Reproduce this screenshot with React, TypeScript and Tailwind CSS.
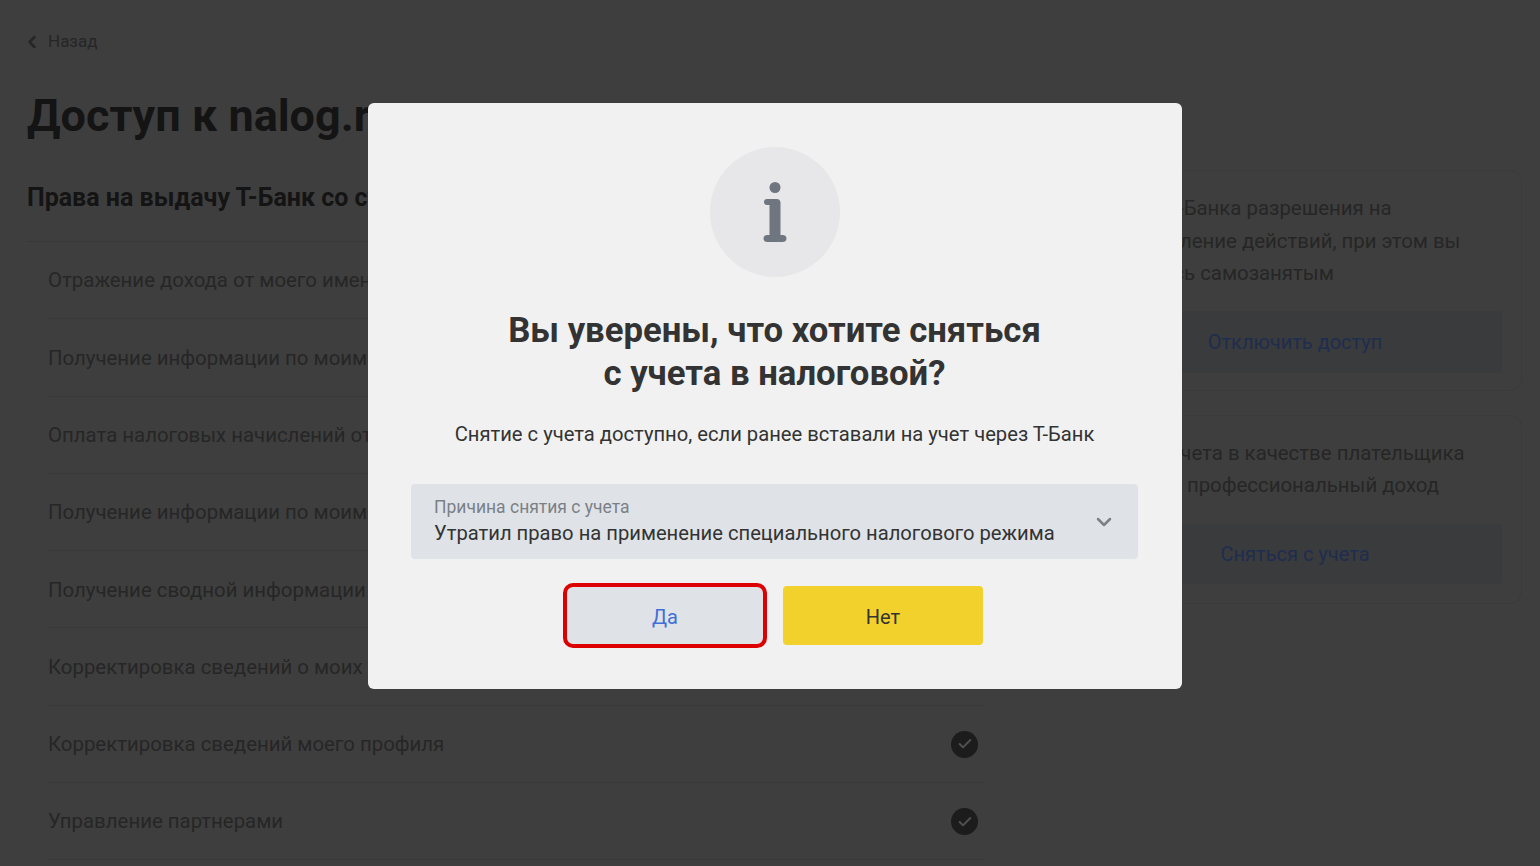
import { Check, ChevronDown, ChevronLeft } from 'lucide-react';

// Rows run on under the modal, so only the part left of it shows
const rights = [
  'Отражение дохода от моего имени',
  'Получение информации по моим доходам',
  'Оплата налоговых начислений от моего',
  'Получение информации по моим',
  'Получение сводной информации',
  'Корректировка сведений о моих доходах',
  'Корректировка сведений моего профиля',
  'Управление партнерами',
];

function InfoIcon() {
  return (
    <svg className="mt-[2px]" width="24" height="62" viewBox="0 0 24 62" fill="#6f7680">
      <circle cx="12" cy="5.5" r="5.5" />
      <path d="M1 20c0-1.700 1.200-3 3-3h10c1.900 0 3.500 1.600 3.500 3.500V53h2c2.200 0 4 1 4 3.500S21.700 60 19.500 60H4.500C2.300 60 .5 59 .5 56.500S2.300 53 4.500 53h2V23H4C2.200 23 1 21.700 1 20z" />
    </svg>
  );
}

export default function App() {
  return (
    <div className="relative h-[866px] w-full overflow-hidden bg-[#3e3e3e] font-['Roboto',sans-serif]">
      <div className="pl-[27px] pr-[18px] pt-[29px]">
        <div className="flex h-[26px] items-center gap-[6px] text-[17px] text-[#262626]">
          <ChevronLeft className="-ml-[5px] h-[20px] w-[20px] text-[#262626]" strokeWidth={3} />
          Назад
        </div>
        <h1 className="mt-[33px] whitespace-nowrap text-[45px] font-bold leading-[56px] text-[#141414]">Доступ к nalog.ru</h1>

        <div className="mt-[38px] flex items-start gap-[84px]">
          <div className="w-[956px] shrink-0">
            <h2 className="mb-[27px] whitespace-nowrap text-[25px] font-bold leading-[32px] text-[#141414]">
              Права на выдачу Т-Банк со статусом самозанятого
            </h2>
            <div className="border-t border-[#383838]">
              {rights.map((text) => (
                <div
                  key={text}
                  className="ml-[21px] flex h-[77.300px] items-center justify-between border-b border-[#383838] pr-[5px] pt-[1px] text-[20.400px] text-[#262626]"
                >
                  {text}
                  <span className="flex h-[27px] w-[27px] items-center justify-center rounded-full bg-[#1c1c1c]">
                    <Check className="h-[16px] w-[16px] text-[#505050]" strokeWidth={3} />
                  </span>
                </div>
              ))}
            </div>
          </div>

          <div className="-mt-[12px] flex flex-1 flex-col gap-[24px]">
            <div className="rounded-[12px] border border-[#3a3a3a] pb-[17px] pl-[20px] pr-[19px] pt-[21px]">
              <p className="whitespace-nowrap text-[20.400px] leading-[32.500px] text-[#262626]">
                Выдали Т-Банка разрешения на
                <br />
                осуществление действий, при этом вы
                <br />
                останетесь самозанятым
              </p>
              <div className="mt-[21px] flex h-[62px] items-center justify-center rounded-[4px] bg-[#3a3b3c] text-[20px] text-[#1f2d4f]">
                Отключить доступ
              </div>
            </div>
            <div className="rounded-[12px] border border-[#3a3a3a] pb-[19px] pl-[20px] pr-[19px] pt-[21px]">
              <p className="whitespace-nowrap text-[20.400px] leading-[32.500px] text-[#262626]">
                Сняты с учета в качестве плательщика
                <br />
                налога на профессиональный доход
              </p>
              <div className="mt-[22px] flex h-[60px] items-center justify-center rounded-[4px] bg-[#3a3b3c] text-[20px] text-[#1f2d4f]">
                Сняться с учета
              </div>
            </div>
          </div>
        </div>
      </div>

      {/* modal */}
      <div className="absolute left-[368px] top-[103px] flex h-[586px] w-[814px] flex-col items-center rounded-[6px] bg-[#f1f1f1] pl-[43px] pr-[44px] pt-[44px]">
        <div className="ml-[1px] flex h-[130px] w-[130px] items-center justify-center rounded-full bg-[#e7e7e9]">
          <InfoIcon />
        </div>
        <h2 className="mt-[32px] text-center text-[34.700px] font-bold leading-[43px] text-[#333333]">
          Вы уверены, что хотите сняться
          <br />с учета в налоговой?
        </h2>
        <p className="mt-[26px] text-[20.200px] leading-[26px] text-[#333333]">
          Снятие с учета доступно, если ранее вставали на учет через Т-Банк
        </p>
        <div className="mt-[37px] flex h-[75px] w-full items-center justify-between rounded-[4px] bg-[#dfe3e8] pl-[23px] pr-[22px]">
          <div>
            <div className="text-[17.500px] leading-[20px] text-[#7b8087]">Причина снятия с учета</div>
            <div className="mt-[3px] text-[20.200px] leading-[26px] text-[#333333]">
              Утратил право на применение специального налогового режима
            </div>
          </div>
          <ChevronDown className="h-[24px] w-[24px] text-[#7b8087]" strokeWidth={2.500} />
        </div>
        <div className="mr-[3px] mt-[24px] flex items-start gap-[16px]">
          <button className="flex h-[65px] w-[204px] items-center justify-center rounded-[10px] border-4 border-[#dc0000] bg-[#dfe3e8] pt-[2px] text-[20px] text-[#3f6fd8]">
            Да
          </button>
          <button className="mt-[3px] flex h-[59px] w-[200px] items-center justify-center rounded-[4px] bg-[#f2d12c] pt-[2px] text-[20px] text-[#333333]">
            Нет
          </button>
        </div>
      </div>
    </div>
  );
}
